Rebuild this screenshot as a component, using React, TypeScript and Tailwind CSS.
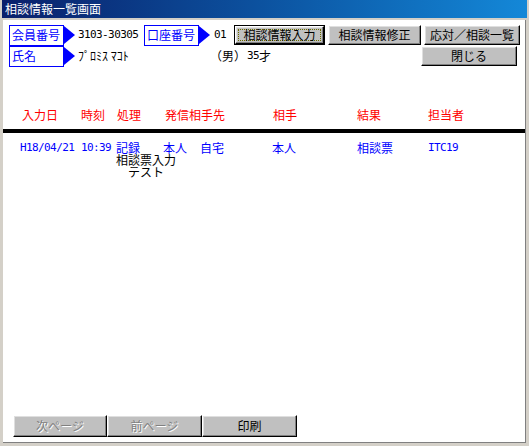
import React from 'react';

const jp = "font-['Noto_Sans_CJK_JP','Noto_Sans',sans-serif]";
const mono = "font-['DejaVu_Sans_Mono','Liberation_Mono',monospace] text-[11px] tracking-[-0.6px]";
const raised =
  'bg-[#c0c0c0] border border-t-white border-l-white border-r-black border-b-black shadow-[inset_-1px_-1px_0_#808080,inset_1px_1px_0_#dfdfdf]';

const Arrow = () => (
  <svg width="12" height="20" viewBox="0 0 12 20" className="shrink-0">
    <polygon points="0,1 11,10 0,19" fill="#0000ff" />
  </svg>
);

const Label: React.FC<{ text: string }> = ({ text }) => (
  <div className="w-[55px] h-[21px] shrink-0 border border-[#0000ff] text-[#0000ff] flex items-center pl-[2px]">
    {text}
  </div>
);

const Btn: React.FC<{ text: string; focused?: boolean; w: string }> = ({ text, focused, w }) =>
  focused ? (
    <div className={`border border-black h-[20px] flex shrink-0 ${w}`}>
      <div className={`${raised} flex-1 flex p-[2px]`}>
        <div className="flex-1 border border-dotted border-[#6b6b00] flex items-center justify-center">{text}</div>
      </div>
    </div>
  ) : (
    <div className={`${raised} h-[20px] shrink-0 flex items-center justify-center ${w}`}>{text}</div>
  );

const cols = ['w-[59px]', 'w-[36px]', 'w-[48px]', 'w-[108px]', 'w-[84px]', 'w-[71px]', 'w-[60px]'];

export default function App() {
  const headers = ['入力日', '時刻', '処理', '発信相手先', '相手', '結果', '担当者'];

  return (
    <div className={`w-[529px] h-[446px] bg-[#d4d0c8] flex flex-col text-[12px] leading-[14px] text-black ${jp}`}>
      <div className="h-[18px] mx-[2px] bg-gradient-to-r from-[#0a1f6b] to-[#1488d8] text-white flex items-center pl-[3px]">
        相談情報一覧画面
      </div>
      <div className="flex-1 flex flex-col bg-white ml-[3px] mr-[3px] mb-[3px] mt-[2px] border-r border-b border-[#808080]">
        {/* header area */}
        <div className="flex flex-col mt-[5px] pl-[6px]">
          <div className="flex items-center h-[20px]">
            <div className="w-[225px] flex items-center">
              <Label text="会員番号" />
              <Arrow />
              <span className={`ml-[2px] w-[66px] ${mono}`}>3103-30305</span>
              <Label text="口座番号" />
              <Arrow />
              <span className={`ml-[3px] ${mono}`}>01</span>
            </div>
            <div className="flex gap-[3px]">
              <Btn text="相談情報入力" focused w="w-[91px]" />
              <Btn text="相談情報修正" w="w-[93px]" />
              <Btn text="応対／相談一覧" w="w-[96px]" />
            </div>
          </div>
          <div className="flex items-center h-[20px] mt-[1px]">
            <Label text="氏名" />
            <Arrow />
            <span className="ml-[2px] w-[132px]">ﾌﾟﾛﾐｽ ﾏｺﾄ</span>
            <span className="w-[37px]">（男）</span>
            <span className="flex items-center">
              <span className={mono}>35</span>
              <span>才</span>
            </span>
            <div className="flex-1" />
            <div className="mr-[8px]">
              <Btn text="閉じる" w="w-[96px]" />
            </div>
          </div>
        </div>

        {/* column headings */}
        <div className="flex mt-[42px] pl-[19px] text-[#ff0000]">
          {headers.map((h, i) => (
            <span key={h} className={cols[i]}>{h}</span>
          ))}
        </div>
        <div className="h-[4px] bg-black mt-[7px]" />

        {/* rows */}
        <div className="flex items-center mt-[8px] pl-[17px] text-[#0000ff] leading-[13px]">
          <span className={`w-[61px] ${mono}`}>H18/04/21</span>
          <span className={`w-[35px] ${mono}`}>10:39</span>
          <span className="w-[47px]">記録</span>
          <span className="w-[37px]">本人</span>
          <span className="w-[72px]">自宅</span>
          <span className="w-[85px]">本人</span>
          <span className="w-[71px]">相談票</span>
          <span className={mono}>ITC19</span>
        </div>
        <div className="pl-[113px] leading-[12px] flex flex-col">
          <span>相談票入力</span>
          <span className="pl-[12px]">テスト</span>
        </div>

        <div className="flex-1" />

        {/* footer buttons */}
        <div className="flex pl-[10px] mb-[5px] h-[22px]">
          <div className={`${raised} w-[94px] flex items-center justify-center text-[#808080] [text-shadow:1px_1px_0_#fff]`}>次ページ</div>
          <div className={`${raised} w-[95px] flex items-center justify-center text-[#808080] [text-shadow:1px_1px_0_#fff]`}>前ページ</div>
          <div className={`${raised} w-[95px] flex items-center justify-center`}>印刷</div>
        </div>
      </div>
    </div>
  );
}
